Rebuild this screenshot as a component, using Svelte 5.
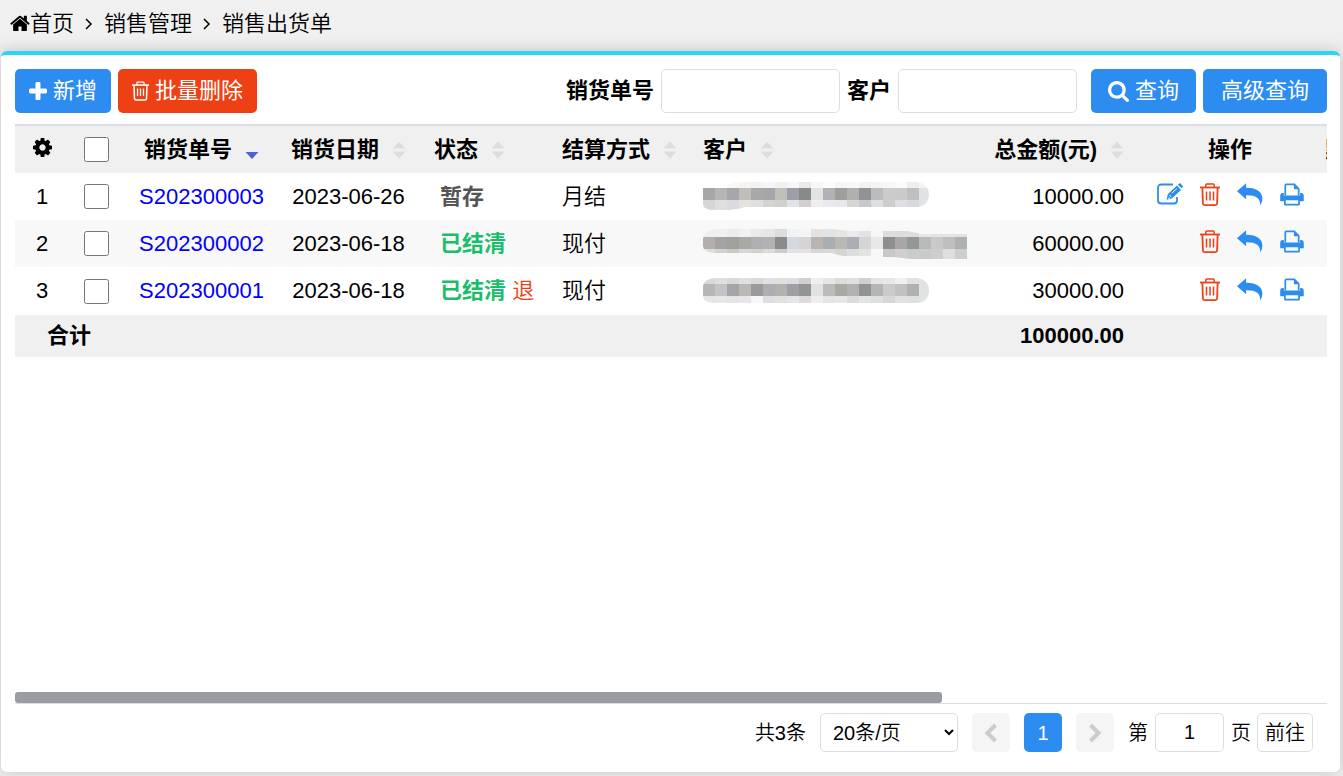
<script lang="ts">
	type Order = {
		no: string;
		date: string;
		status: string;
		settled: boolean;
		returned: boolean;
		payment: string;
		amount: string;
		mosaic: { clip: string; bands: { y: number; h: number; cells: string[] }[] };
	};

	const cells = (s: string) => s.split(' ').map((c) => '#' + c);

	const orders: Order[] = [
		{
			no: 'S202300003', date: '2023-06-26', status: '暂存', settled: false, returned: false, payment: '月结', amount: '10000.00',
			mosaic: {
				clip: 'M0 6Q22 6 32 0H214Q226 2 226 13Q226 22 216 25H42Q30 29 12 28Q0 28 0 22Z',
				bands: [
					{ y: 0, h: 6, cells: cells('fff fff f8f8f8 f5f4f3 f1f3f2 f6f6f6 f0f0ee f6f6f8 e8e9e9 f8f7f7 fcfcfc f5f5f5 f8f8f7 f2f2f2 f4f4f5 f7f7f7 fbfbfb eee f3f3f3') },
					{ y: 6, h: 12, cells: cells('a9a7a5 b6b7b4 a6a6ac c1bdb9 a8a9a5 a5a6aa bebfb9 9d9ea6 878a8b e3e2e0 b1b2b5 9e9f99 b0b0ae 929296 b9bebd cbcbcb cacac8 bebfc1 e0e3e1') },
					{ y: 18, h: 10, cells: cells('d7d6d6 dde0df d9dbdc e5e3e2 dfdfdf d4d3d2 d0d0ce e2e3e6 d1d0cf f0eff0 e9eaeb e8e8eb d6d7d3 c8c7ca dedfdf cfcdca dedfe2 d8d9dc e0e3e1') }
				]
			}
		},
		{
			no: 'S202300002', date: '2023-06-18', status: '已结清', settled: true, returned: false, payment: '现付', amount: '60000.00',
			mosaic: {
				clip: 'M0 10Q2 0 16 0H132L145 2H205L218 5H264V30H208L190 28H168V27H140L128 24H12Q0 23 0 17Z',
				bands: [
					{ y: 0, h: 8, cells: cells('eee f0f0ee ececec f1f1f1 e8e9e9 e8e6e4 ddd f0f2f5 f4f5f6 e3e2e1 e2e3e5 e5e5e2 e8eaec e3e3e3 f6f6f6 ddd dcdcda dbdedc e5e7e6 e3e3e5 e5e5e3 e1e3e1') },
					{ y: 8, h: 12, cells: cells('b4afac a3a3a4 9fa19b a8aaa3 aeaeb3 b2b2b0 898b8d d5d8df d5d5d7 b9b4b1 a9aeb2 bab8b4 acaeb5 d5d5d6 e9e8e7 8e8e8d a8a6a8 929896 b8bab9 c9c9cb bebebf adb1b0') },
					{ y: 20, h: 10, cells: cells('ddd d2d2d1 c9c9c7 d7d7d6 d1d1d0 dcdbd9 ccc e3e3e5 e4e2e0 d8d6d4 dad9d8 d5d4d2 dcdedf e3e3e4 f8f8f9 c7c8c7 cfcfcf cacbcb cacac9 cececf dfdfde cdcfce') }
				]
			}
		},
		{
			no: 'S202300001', date: '2023-06-18', status: '已结清', settled: true, returned: true, payment: '现付', amount: '30000.00',
			mosaic: {
				clip: 'M0 10Q2 2 13 2H214Q226 4 226 14Q226 26 214 27H10Q0 26 0 20Z',
				bands: [
					{ y: 2, h: 6, cells: cells('d7d8d7 dededc d9d9d8 dfdfe0 d7d8d8 e1e1e3 dfe1df dddee0 d0d0d1 eee e6e6e7 dcdcdb e0e0e1 d0d0d4 e4e5e4 e7e7e6 f0f0f0 e0e1e2 e1e3e1') },
					{ y: 8, h: 12, cells: cells('b5b6b6 c3c3c3 a4a5aa bbb8b4 9a9a9d adaeb1 b2b3ae 9fa0a6 939496 e1e1e1 bbbbbe a9a8a3 b2b2b1 929296 b2b7b6 cccbca c0c1c1 b0b1b3 e0e3e1') },
					{ y: 20, h: 7, cells: cells('e5e5e5 e8e6e6 e4e4e5 e7e6e8 f7f7f7 dedede e2e1e1 e5e5e7 dedbda eee e4e4e5 e7e7e5 dcdcdc e4e4e5 dedfdf d7d7d8 e1e1e1 dfdfe0 e1e3e1') }
				]
			}
		}
	];

	const colWidths = [54, 54, 157, 137, 134, 141, 278, 165, 190, 182, 182, 183];
	const tableWidth = colWidths.reduce((a, b) => a + b, 0);

	let checked = $state(orders.map(() => false));
	const allChecked = $derived(checked.every(Boolean));

	let orderNo = $state('');
	let customer = $state('');
	let pageSize = $state('20');
	let page = $state('1');
	let viewWidth = $state(0);
	const thumb = $derived(Math.min(100, (viewWidth / tableWidth) * 100));

	function toggleAll() {
		const next = !allChecked;
		checked = checked.map(() => next);
	}
</script>

{#snippet sorter(desc = false)}
	<svg class="sorter" viewBox="0 0 14 18" aria-hidden="true">
		{#if desc}
			<path d="M0.500 11h13l-6.500 7z" fill="#4a63d0" />
		{:else}
			<path d="M0.500 7.500L7 0.500l6.500 7zM0.500 10.500h13L7 17.500z" fill="#dddddf" />
		{/if}
	</svg>
{/snippet}

{#snippet trash()}
	<svg class="trash" viewBox="0 0 20 23" aria-hidden="true">
		<path d="M0 4.500h20" stroke-width="1.800" />
		<path d="M5.800 4V2q0-1 1-1h6.400q1 0 1 1v2" stroke-width="1.500" />
		<path d="M2.400 5l.5 15.500q.1 1.600 1.700 1.600h10.800q1.600 0 1.700-1.600l.5-15.500" stroke-width="1.800" />
		<path d="M6.500 8.500v9M10 8.500v9M13.500 8.500v9" stroke-width="1.500" />
	</svg>
{/snippet}

<nav class="crumbs">
	<a href="#home">
		<svg viewBox="60 200 1672 1400" aria-hidden="true"><path d="M1472 992v480q0 26-19 45t-45 19h-384v-384h-256v384h-384q-26 0-45-19t-19-45v-480q0-1 .5-3t.5-3l575-474 575 474q1 2 1 6zm223-69l-62 74q-8 9-21 11h-3q-13 0-21-7l-692-577-692 577q-12 8-24 7-13-2-21-11l-62-74q-8-10-7-23.500t11-21.500l719-599q32-26 76-26t76 26l244 204v-195q0-14 9-23t23-9h192q14 0 23 9t9 23v408l219 182q10 8 11 21.500t-7 23.500z" /></svg>首页</a>
	<svg class="sep" viewBox="0 0 8 12" aria-hidden="true"><path d="M1 1l5 5-5 5" /></svg>
	<span>销售管理</span>
	<svg class="sep" viewBox="0 0 8 12" aria-hidden="true"><path d="M1 1l5 5-5 5" /></svg>
	<span>销售出货单</span>
</nav>

<main class="panel">
	<div class="toolbar">
		<button type="button" class="btn">
			<svg class="plus" viewBox="192 128 1408 1408" aria-hidden="true"><path d="M1600 736v192q0 40-28 68t-68 28h-416v416q0 40-28 68t-68 28h-192q-40 0-68-28t-28-68v-416h-416q-40 0-68-28t-28-68v-192q0-40 28-68t68-28h416v-416q0-40 28-68t68-28h192q40 0 68 28t28 68v416h416q40 0 68 28t28 68z" /></svg>
			新增
		</button>
		<button type="button" class="btn danger">{@render trash()}批量删除</button>
		<form class="search" onsubmit={(e) => e.preventDefault()}>
			<label for="order-no">销货单号</label>
			<input id="order-no" type="text" bind:value={orderNo} />
			<label for="customer">客户</label>
			<input id="customer" type="text" bind:value={customer} />
			<button type="submit" class="btn query">
				<svg class="glass" viewBox="64 128 1664 1664" aria-hidden="true"><path d="M1216 832q0-185-131.500-316.500t-316.500-131.500-316.500 131.500-131.500 316.500 131.500 316.500 316.500 131.500 316.500-131.500 131.500-316.500zm512 832q0 52-38 90t-90 38q-54 0-90-38l-343-342q-179 124-399 124-143 0-273.500-55.500t-225-150-150-225-55.500-273.500 55.500-273.500 150-225 225-150 273.500-55.500 273.500 55.500 225 150 150 225 55.500 273.500q0 220-124 399l343 343q37 37 37 90z" /></svg>
				查询
			</button>
			<button type="button" class="btn advanced">高级查询</button>
		</form>
	</div>

	<div class="grid" bind:clientWidth={viewWidth}>
		<table style="width: {tableWidth}px">
			<colgroup>
				{#each colWidths as w}<col style="width: {w}px" />{/each}
			</colgroup>
			<thead>
				<tr>
					<th class="center">
						<button type="button" class="cog" aria-label="列设置">
							<svg viewBox="128 128 1536 1536" aria-hidden="true"><path d="M1152 896q0-106-75-181t-181-75-181 75-75 181 75 181 181 75 181-75 75-181zm512-109v222q0 12-8 23t-20 13l-185 28q-19 54-39 91 35 50 107 138 10 12 10 25t-9 23q-27 37-99 108t-94 71q-12 0-26-9l-138-108q-44 23-91 38-16 136-29 186-7 28-36 28h-222q-14 0-24.500-8.500t-11.500-21.500l-28-184q-49-16-90-37l-141 107q-10 9-25 9-14 0-25-11-126-114-165-168-7-10-7-23 0-12 8-23 15-21 51-66.500t54-70.500q-27-50-41-99l-183-27q-13-2-21-12.500t-8-23.500v-222q0-12 8-23t19-13l186-28q14-46 39-92-40-57-107-138-10-12-10-24 0-10 9-23 26-36 98.500-107.500t94.500-71.500q13 0 26 10l138 107q44-23 91-38 16-136 29-186 7-28 36-28h222q14 0 24.500 8.500t11.500 21.500l28 184q49 16 90 37l142-107q9-9 24-9 13 0 25 10 129 119 165 170 7 8 7 22 0 12-8 23-15 21-51 66.500t-54 70.500q26 50 41 98l183 28q13 2 21 12.500t8 23.500z" /></svg>
						</button>
					</th>
					<th class="center"><input type="checkbox" aria-label="全选" checked={allChecked} onchange={toggleAll} /></th>
					<th class="center">销货单号{@render sorter(true)}</th>
					<th class="center">销货日期{@render sorter()}</th>
					<th class="state">状态{@render sorter()}</th>
					<th>结算方式{@render sorter()}</th>
					<th>客户{@render sorter()}</th>
					<th class="right">总金额(元){@render sorter()}</th>
					<th class="center">操作</th>
					<th class="flush">默认仓库</th>
					<th>制单人</th>
					<th>备注</th>
				</tr>
			</thead>
			<tbody>
				{#each orders as order, i (order.no)}
					<tr>
						<td class="center">{i + 1}</td>
						<td class="center"><input type="checkbox" aria-label="选择 {order.no}" bind:checked={checked[i]} /></td>
						<td class="center"><a href="#{order.no}">{order.no}</a></td>
						<td class="center">{order.date}</td>
						<td class="status">
							<b class:settled={order.settled}>{order.status}</b>
							{#if order.returned}<span class="returned">退</span>{/if}
						</td>
						<td>{order.payment}</td>
						<td>
							<svg class="mosaic" width="264" height="30" viewBox="0 0 264 30" aria-hidden="true">
								<clipPath id="mask-{i}"><path d={order.mosaic.clip} /></clipPath>
								<g clip-path="url(#mask-{i})" shape-rendering="crispEdges">
									{#each order.mosaic.bands as band}
										{#each band.cells as fill, n}
											<rect x={n * 12} y={band.y} width="12" height={band.h} {fill} />
										{/each}
									{/each}
								</g>
							</svg>
						</td>
						<td class="right">{order.amount}</td>
						<td class="ops-cell">
							<div class="ops">
								{#if !order.settled}
									<button type="button" class="edit" aria-label="编辑">
										<svg viewBox="0 0 26 23" aria-hidden="true">
											<path d="M16 1.500H4.500Q1 1.500 1 5v12.500Q1 20.500 4.500 20.500h12.500q3 0 3-3V14" fill="none" stroke="currentColor" stroke-width="1.800" />
											<path d="M9.500 16.800l1.400-5.800L20 2.600l4 4.400-9.200 8.400z" />
											<path d="M20.800 1.800l1.400-1.300q.8-.6 1.500.1l2 2.300q.6.8-.1 1.400l-1 .9z" />
											<path d="M12.400 11.800l1.900 2.300M11 15.400l2-.5M14.800 10.200l5-4.600" fill="none" stroke="#fff" stroke-width="0.900" />
										</svg>
									</button>
								{/if}
								<button type="button" class="remove" aria-label="删除">{@render trash()}</button>
								<button type="button" class="reply" aria-label="退货">
									<svg viewBox="0 0 27 24" aria-hidden="true"><path d="M0 8.500L9.500.3V5C20 4.800 26.500 9 26.500 16.500q0 4-2.200 7C24.500 16 20 12.600 9.500 12.800V17z" /></svg>
								</button>
								<button type="button" class="print" aria-label="打印">
									<svg viewBox="0 0 25 24" aria-hidden="true">
										<path d="M5.500 13V2.500q0-1 1-1h8.500l4.500 4.500v7" fill="none" stroke="currentColor" stroke-width="1.800" />
										<path d="M14.500 1v5.500h5.500z" />
										<path fill-rule="evenodd" d="M4 10.500v2.500h17v-2.500h1q2.800 0 2.800 3v5.500h-4v3.200q0 1.300-1.300 1.300h-14q-1.300 0-1.300-1.300V19h-4v-5.500q0-3 2.800-3zM6 18v3.700h13V18z" />
									</svg>
								</button>
							</div>
						</td>
						<td></td>
						<td></td>
						<td></td>
					</tr>
				{/each}
			</tbody>
			<tfoot>
				<tr>
					<td colspan="2" class="center">合计</td>
					<td colspan="5"></td>
					<td class="right">100000.00</td>
					<td colspan="4"></td>
				</tr>
			</tfoot>
		</table>
		<div class="track"><div class="thumb" style="width: {thumb}%"></div></div>
	</div>

	<footer class="pager">
		<span class="total">共3条</span>
		<select aria-label="每页条数" bind:value={pageSize}>
			<option value="20">20条/页</option>
			<option value="50">50条/页</option>
			<option value="100">100条/页</option>
		</select>
		<button type="button" class="num" disabled aria-label="上一页">
			<svg viewBox="0 0 14 20" aria-hidden="true"><path d="M11.500 2L3.500 10l8 8" /></svg>
		</button>
		<button type="button" class="num current">1</button>
		<button type="button" class="num" disabled aria-label="下一页">
			<svg viewBox="0 0 14 20" aria-hidden="true"><path d="M2.500 2l8 8-8 8" /></svg>
		</button>
		<label for="page">第</label>
		<input id="page" type="text" bind:value={page} />
		<span>页</span>
		<button type="button" class="go">前往</button>
	</footer>
</main>

<style>
	:global(body) {
		background: #f0f0f0;
	}

	:global(#app) {
		box-sizing: border-box;
		min-height: 100vh;
		padding: 0 3px 4px 1px;
		display: flex;
		flex-direction: column;
		font: 350 22px/30px 'Liberation Sans', 'Noto Sans CJK SC', sans-serif;
		color: #000;
	}

	button,
	input,
	select {
		box-sizing: border-box;
		font: inherit;
		color: inherit;
		margin: 0;
	}

	button {
		padding: 0;
		border: none;
		background: none;
		cursor: pointer;
	}

	svg {
		fill: currentColor;
		flex-shrink: 0;
	}

	.trash {
		fill: none;
		stroke: currentColor;
	}

	.crumbs {
		height: 51px;
		padding: 0 0 4px 9px;
		box-sizing: border-box;
		display: flex;
		align-items: center;
		gap: 11px;
	}

	.crumbs a {
		display: flex;
		align-items: center;
		color: inherit;
		text-decoration: none;
	}

	.crumbs a svg {
		width: 20px;
		height: 17px;
	}

	.sep {
		width: 8px;
		height: 12px;
		fill: none;
		stroke: #000;
		stroke-width: 1.5;
	}

	.panel {
		flex: 1;
		display: flex;
		flex-direction: column;
		padding: 14px 13px 20px 14px;
		background: #fff;
		border-top: 4px solid #2fd3f5;
		border-radius: 6px;
		box-shadow: 0 0 16px rgba(0, 0, 0, 0.2);
	}

	.toolbar {
		display: flex;
		gap: 7px;
		margin-bottom: 11px;
	}

	.btn {
		height: 44px;
		padding: 0 14px;
		display: flex;
		align-items: center;
		gap: 6px;
		border-radius: 5px;
		background: #2d8cf0;
		color: #fff;
		font-weight: 400;
		white-space: nowrap;
	}

	.btn.danger {
		background: #ed4014;
	}

	.btn.query {
		padding: 0 17px;
		margin-left: 7px;
	}

	.btn.advanced {
		padding: 0 18px;
	}

	.plus {
		width: 18px;
		height: 18px;
	}

	.glass {
		width: 21px;
		height: 21px;
	}

	.danger .trash {
		width: 17px;
		height: 20px;
	}

	.search {
		flex: 1;
		display: flex;
		justify-content: flex-end;
		align-items: center;
		gap: 7px;
	}

	.search label {
		font-weight: 700;
	}

	.search input {
		width: 179px;
		height: 44px;
		padding: 0 10px;
		border: 1px solid #dcdee2;
		border-radius: 5px;
	}

	.grid {
		flex: 1;
		display: flex;
		flex-direction: column;
		overflow: hidden;
		border-bottom: 1px solid #dcdee2;
	}

	table {
		table-layout: fixed;
		border-collapse: separate;
		border-spacing: 0;
	}

	th,
	td {
		box-sizing: border-box;
		height: 47px;
		padding: 0 11px;
		text-align: left;
		white-space: nowrap;
	}

	th {
		height: 49px;
		background: #f0f0f0;
		border-top: 2px solid #dcdee2;
	}

	th,
	tfoot td {
		font-weight: 700;
	}

	tbody tr:nth-child(even) {
		background: #f8f8f9;
	}

	tbody tr:last-child td {
		height: 48px;
	}

	tfoot td {
		height: 42px;
		background: #f0f0f0;
	}

	th.center,
	td.center {
		padding: 0;
		text-align: center;
	}

	th.right,
	td.right {
		text-align: right;
	}

	th.flush {
		padding: 0;
	}

	th.state {
		padding-left: 17px;
	}

	td.status {
		padding: 0 0 0 23px;
	}

	.status b {
		font-weight: 700;
		color: #555;
	}

	.status b.settled {
		color: #19be6b;
	}

	.returned {
		color: #ed4014;
	}

	td a {
		color: #00f;
		text-decoration: none;
	}

	input[type='checkbox'] {
		display: block;
		width: 25px;
		height: 25px;
		margin: 0 auto;
	}

	.sorter {
		width: 14px;
		height: 18px;
		margin-left: 13px;
		vertical-align: -2px;
	}

	.cog svg {
		display: block;
		width: 19px;
		height: 19px;
	}

	.mosaic {
		display: block;
	}

	td.ops-cell {
		padding: 0 21px 4px 0;
	}

	.ops {
		display: flex;
		justify-content: flex-end;
		gap: 17px;
		color: #2d8cf0;
	}

	.ops svg {
		display: block;
		height: 23px;
	}

	.ops .remove {
		color: #ed4014;
	}

	.track {
		margin-top: auto;
		height: 11px;
	}

	.thumb {
		height: 11px;
		border-radius: 3px;
		background: #9b9ca1;
	}

	.pager {
		display: flex;
		justify-content: flex-end;
		align-items: center;
		gap: 14px;
		padding: 9px 14px 0 0;
		font-size: 20px;
	}

	.pager select,
	.pager input,
	.go {
		height: 39px;
		border: 1px solid #dcdee2;
		border-radius: 5px;
		background: #fff;
	}

	.pager select {
		width: 138px;
		padding: 0 0 0 8px;
	}

	.pager input {
		width: 69px;
		padding: 0;
		margin: 0 -7px;
		text-align: center;
	}

	.go {
		padding: 0 7px;
		margin-left: -8px;
	}

	.num {
		width: 38px;
		height: 39px;
		display: flex;
		align-items: center;
		justify-content: center;
		border-radius: 5px;
	}

	.num:disabled {
		background: #f5f5f5;
		cursor: default;
	}

	.num svg {
		width: 14px;
		height: 20px;
		fill: none;
		stroke: #ccc;
		stroke-width: 4;
	}

	.current {
		background: #2d8cf0;
		color: #fff;
	}
</style>
